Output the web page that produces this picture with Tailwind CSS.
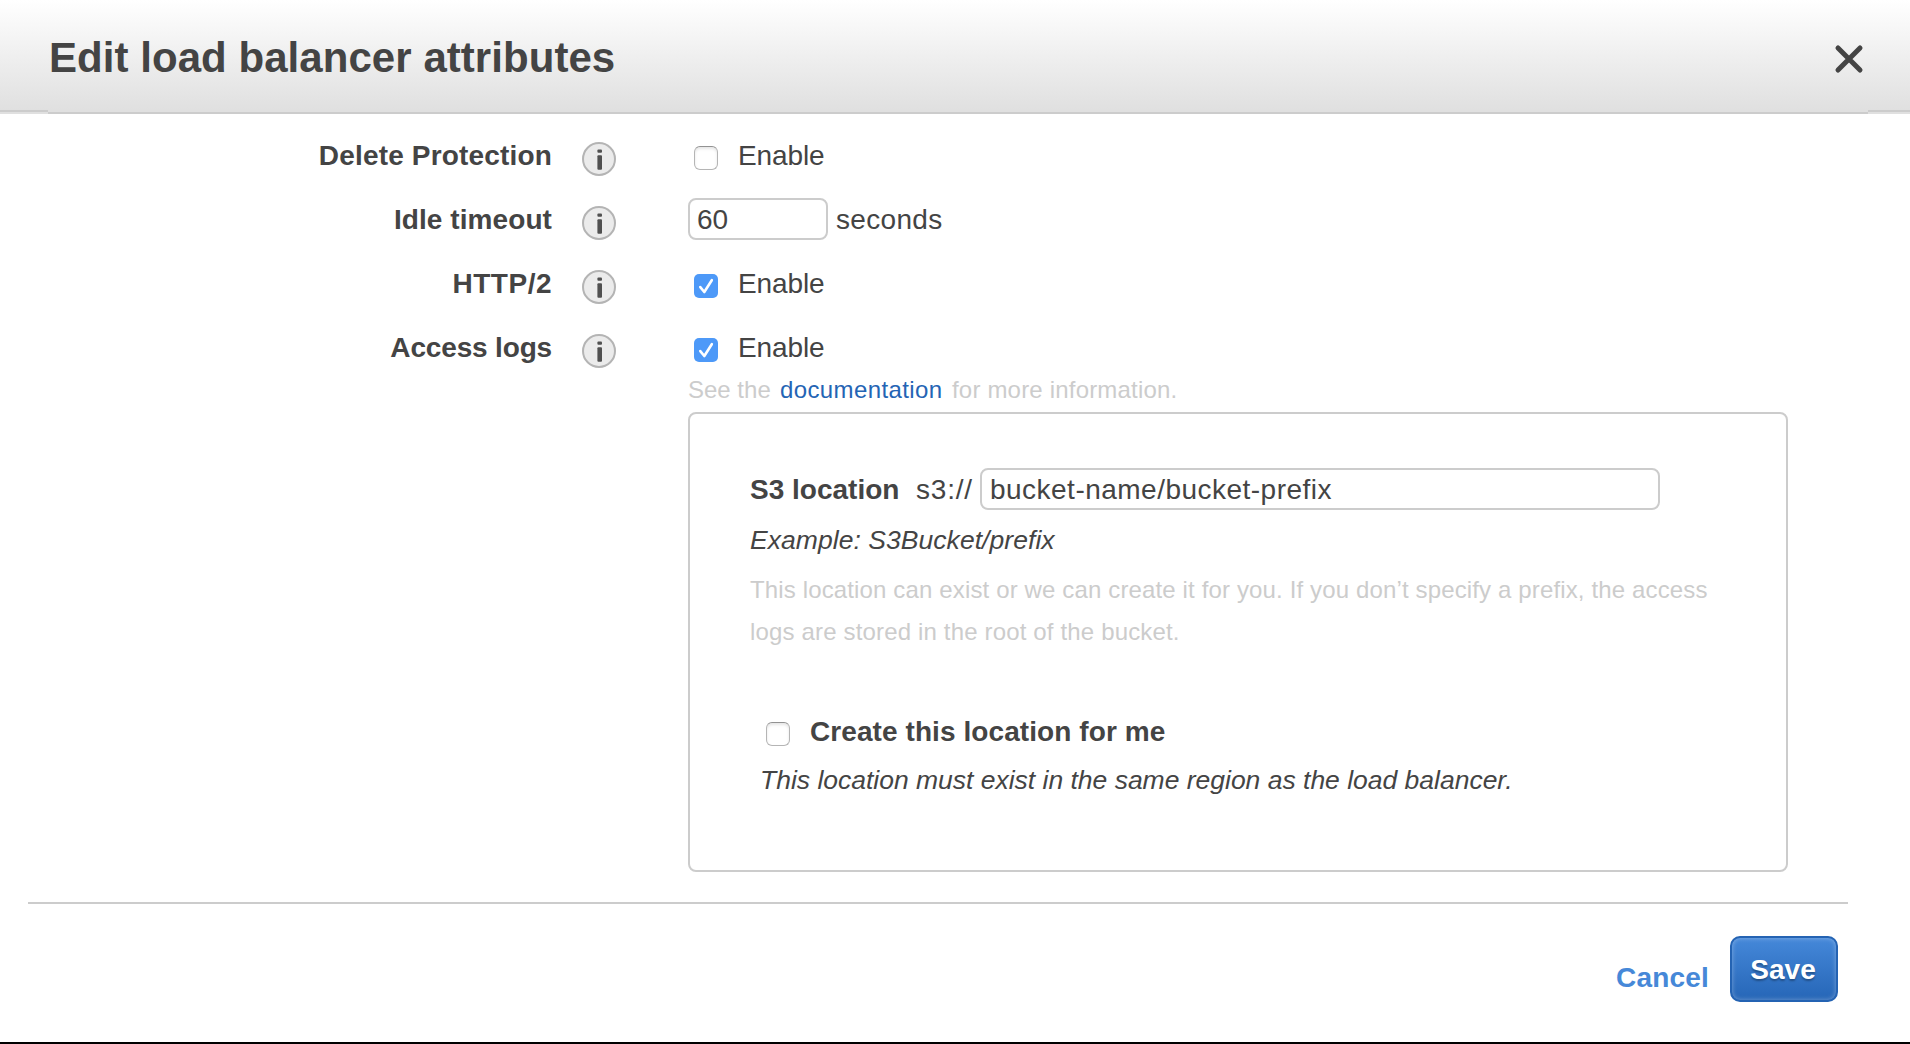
<!DOCTYPE html>
<html lang="en">
<head>
<meta charset="utf-8">
<title>Edit load balancer attributes</title>
<script src="https://cdn.jsdelivr.net/npm/@tailwindcss/browser@4"></script>
</head>
<body class="bg-white">
<svg class="hidden">
  <defs>
    <symbol id="info" viewBox="0 0 34 34">
      <circle cx="17" cy="17" r="16" fill="#ebebeb" stroke="#b4b4b4" stroke-width="2"/>
      <rect x="15.4" y="7.6" width="4.6" height="3.2" rx="1" fill="#505050"/>
      <rect x="15.4" y="13.2" width="4.6" height="14.6" rx="1" fill="#505050"/>
    </symbol>
    <symbol id="on" viewBox="0 0 24 24">
      <rect width="24" height="24" rx="5" fill="#4d99f8"/>
      <path d="M6.3 13.1l4 4.9L17.8 6.2" fill="none" stroke="#fff" stroke-width="2.6" stroke-linecap="round" stroke-linejoin="round"/>
    </symbol>
  </defs>
</svg>
<main class="flex h-[1044px] w-[1910px] flex-col border-b-2 border-black font-['Liberation_Sans',Arial,sans-serif] text-[28px] text-[#444]">
  <header class="flex shrink-0 flex-col">
    <div class="flex h-[110px] items-center justify-between bg-linear-to-b from-white to-[#e0e0e0] pr-[46px] pl-[49px]">
      <h1 class="mt-1.5 text-[42px] leading-[60px] font-bold tracking-[0.05px]">Edit load balancer attributes</h1>
      <button aria-label="Close" class="mt-2"><svg class="size-[30px]" viewBox="0 0 30 30"><path d="M4 4l22 22M26 4L4 26" fill="none" stroke="#444" stroke-width="5" stroke-linecap="round"/></svg></button>
    </div>
    <div class="flex h-1">
      <div class="w-12 border-t-2 border-[#ccc] bg-[#e0e0e0]"></div>
      <div class="grow border-b-2 border-[#ccc] bg-[#e0e0e0]"></div>
      <div class="w-[42px] border-t-2 border-[#ccc] bg-[#e0e0e0]"></div>
    </div>
  </header>

  <form class="flex flex-col pt-2.5">
    <div class="flex h-16 items-center leading-[64px]">
      <label class="w-[552px] text-right font-bold tracking-[0.17px]">Delete Protection</label>
      <svg class="mt-1.5 ml-[30px] size-[34px]"><use href="#info"/></svg>
      <span class="mt-1 ml-[78px] size-6 rounded-md border border-[#b5b5b5] border-t-[#929292] bg-white shadow-[inset_0_2px_3px_rgba(0,0,0,0.1)]"></span>
      <span class="ml-5 tracking-[-0.1px]">Enable</span>
    </div>
    <div class="flex h-16 items-center leading-[64px]">
      <label class="w-[552px] text-right font-bold tracking-[0.08px]">Idle timeout</label>
      <svg class="mt-1.5 ml-[30px] size-[34px]"><use href="#info"/></svg>
      <div class="mb-0.5 ml-[72px] flex h-[42px] w-[140px] items-center rounded-lg border-2 border-[#ccc] pt-0.5 pl-[7px] leading-[38px]">60</div>
      <span class="ml-[8px] tracking-[0.33px]">seconds</span>
    </div>
    <div class="flex h-16 items-center leading-[64px]">
      <label class="w-[552px] text-right font-bold tracking-[0.5px]">HTTP/2</label>
      <svg class="mt-1.5 ml-[30px] size-[34px]"><use href="#info"/></svg>
      <svg class="mt-1 ml-[78px] size-6"><use href="#on"/></svg>
      <span class="ml-5 tracking-[-0.1px]">Enable</span>
    </div>
    <div class="-mb-1.5 flex h-16 items-center leading-[64px]">
      <label class="w-[552px] text-right font-bold tracking-[-0.16px]">Access logs</label>
      <svg class="mt-1.5 ml-[30px] size-[34px]"><use href="#info"/></svg>
      <svg class="mt-1 ml-[78px] size-6"><use href="#on"/></svg>
      <span class="ml-5 tracking-[-0.1px]">Enable</span>
    </div>

    <section class="ml-[688px] w-[1100px]">
      <p class="flex h-8 text-[24px] leading-8 whitespace-nowrap text-[#ccc]"><span class="w-[92px]">See the</span><a class="w-[172px] tracking-[0.38px] text-[#2464b4]">documentation</a><span class="tracking-[0.19px]">for more information.</span></p>
      <div class="mt-1.5 h-[460px] rounded-lg border-2 border-[#ccc] pt-[54px] pl-[60px]">
        <div class="flex h-[42px] items-center leading-[42px] whitespace-nowrap">
          <label class="w-[166px] pt-0.5 font-bold">S3 location</label>
          <span class="w-[64px] pt-0.5 tracking-[0.79px]">s3://</span>
          <div class="flex h-[42px] w-[680px] items-center rounded-lg border-2 border-[#ccc] pt-0.5 pl-2 leading-[38px] tracking-[0.48px]">bucket-name/bucket-prefix</div>
        </div>
        <p class="mt-[10px] h-[41px] text-[26.5px] leading-10 tracking-[0.05px] italic">Example: S3Bucket/prefix</p>
        <p class="mt-2 text-[24px] leading-[42px] whitespace-nowrap text-[#ccc]"><span class="tracking-[0.14px]">This location can exist or we can create it for you. If you don’t specify a prefix, the access</span><br><span class="tracking-[0.16px]">logs are stored in the root of the bucket.</span></p>
        <div class="mt-[59px] flex h-10 items-center pl-4 leading-10">
          <span class="mt-1 size-6 rounded-md border border-[#b5b5b5] border-t-[#929292] bg-white shadow-[inset_0_2px_3px_rgba(0,0,0,0.1)]"></span>
          <label class="ml-5 font-bold tracking-[0.08px]">Create this location for me</label>
        </div>
        <p class="mt-2 pl-2.5 text-[26.5px] leading-10 tracking-[-0.01px] whitespace-nowrap italic">This location must exist in the same region as the load balancer.</p>
      </div>
    </section>
  </form>

  <footer class="mt-[30px] mr-[62px] ml-7 flex items-start justify-end border-t-2 border-[#ccc] pt-8 pr-2.5 font-bold">
    <a class="mt-[22px] mr-[21px] leading-10 tracking-[0.2px] text-[#4688d8]">Cancel</a>
    <button class="h-[66px] w-[108px] rounded-[10px] border-2 border-[#2463b3] bg-linear-to-b from-[#4588d9] to-[#2666b7] pt-0.5 pr-0.5 leading-[60px] tracking-[0.06px] text-white shadow-[inset_0_0_5px_rgba(255,255,255,0.35)] text-shadow-[0_2px_2px_rgba(0,0,0,0.3)]">Save</button>
  </footer>
</main>
</body>
</html>
